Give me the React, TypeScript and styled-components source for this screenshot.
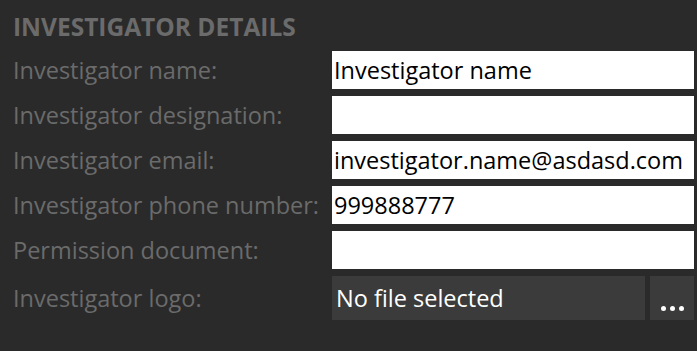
import React from 'react';
import styled, { createGlobalStyle } from 'styled-components';

const GlobalStyle = createGlobalStyle`
  html, body {
    margin: 0;
    padding: 0;
    background: #2a2a2a;
  }
  body {
    font-family: "Open Sans", "Noto Sans", sans-serif;
  }
`;

const Panel = styled.div`
  width: 697px;
  height: 351px;
  box-sizing: border-box;
  padding: 11px 3px 0 13px;
  background: #2a2a2a;
`;

const Heading = styled.h2`
  margin: 0 0 9px 0;
  font-size: 24.5px;
  font-weight: 700;
  line-height: 31px;
  color: #6b6b6b;
`;

const Form = styled.div`
  display: grid;
  grid-template-columns: 319px 1fr;
  row-gap: 7px;
  align-items: center;
`;

const Label = styled.label`
  font-size: 23.5px;
  color: #6b6b6b;
  white-space: nowrap;
`;

const TextField = styled.input`
  height: 38px;
  box-sizing: border-box;
  border: none;
  outline: none;
  margin: 0;
  padding: 0 2px;
  background: #ffffff;
  color: #000000;
  font-family: inherit;
  font-size: 23.5px;
  width: 100%;
`;

const FileRow = styled.div`
  display: flex;
  gap: 5px;
  height: 44px;
`;

const FileName = styled.div`
  flex: 1;
  display: flex;
  align-items: center;
  padding: 0 4px;
  background: #3b3b3b;
  color: #ffffff;
  font-size: 23.5px;
`;

const BrowseButton = styled.button`
  width: 44px;
  height: 44px;
  border: none;
  padding: 0 0 9px 0;
  background: #3b3b3b;
  display: flex;
  align-items: flex-end;
  justify-content: center;
  gap: 4px;
  cursor: pointer;
`;

const Dot = styled.span`
  width: 5px;
  height: 5px;
  border-radius: 50%;
  background: #ffffff;
`;

const fields = [
  { label: 'Investigator name:', value: 'Investigator name' },
  { label: 'Investigator designation:', value: '' },
  { label: 'Investigator email:', value: 'investigator.name@asdasd.com' },
  { label: 'Investigator phone number:', value: '999888777' },
  { label: 'Permission document:', value: '' },
];

const App: React.FC = () => {
  return (
    <>
      <GlobalStyle />
      <Panel>
        <Heading>INVESTIGATOR DETAILS</Heading>
        <Form>
          {fields.map((f) => (
            <React.Fragment key={f.label}>
              <Label>{f.label}</Label>
              <TextField type="text" defaultValue={f.value} />
            </React.Fragment>
          ))}
          <Label>Investigator logo:</Label>
          <FileRow>
            <FileName>No file selected</FileName>
            <BrowseButton>
              <Dot />
              <Dot />
              <Dot />
            </BrowseButton>
          </FileRow>
        </Form>
      </Panel>
    </>
  );
};

export default App;
